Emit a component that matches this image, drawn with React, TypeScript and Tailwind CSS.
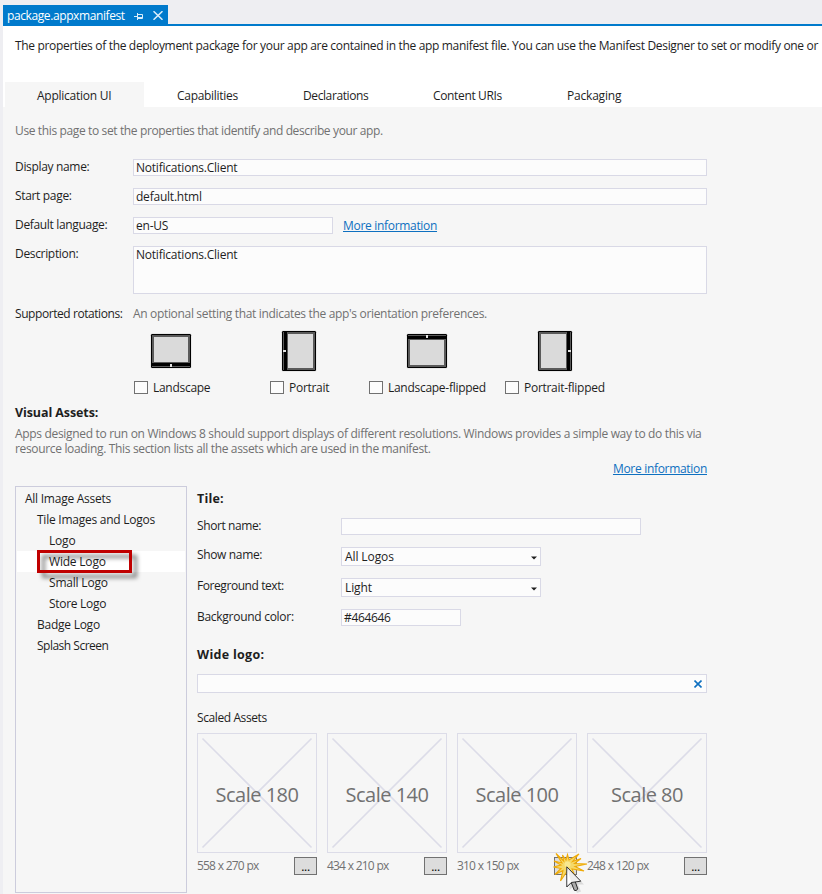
import type { ReactNode } from "react";

const pageTabs = [
  { label: "Application UI", box: "w-[139px] bg-[#f6f6f6] pl-8 tracking-[-0.25px]" },
  { label: "Capabilities", box: "w-[126px] pl-[33px] tracking-[-0.3px]" },
  { label: "Declarations", box: "w-[130px] pl-[33px] tracking-[-0.4px]" },
  { label: "Content URIs", box: "w-[134px] pl-[33px] tracking-[-0.35px]" },
  { label: "Packaging", box: "w-[121px] pl-[33px] tracking-[-0.2px]" },
];

const treeItems = [
  { label: "All Image Assets", indent: "pl-2 tracking-[-0.25px]" },
  { label: "Tile Images and Logos", indent: "pl-5 tracking-[-0.25px]" },
  { label: "Logo", indent: "pl-8 tracking-[-0.2px]" },
  { label: "Wide Logo", indent: "pl-8 tracking-[-0.2px]", selected: true },
  { label: "Small Logo", indent: "pl-8 tracking-[-0.2px]" },
  { label: "Store Logo", indent: "pl-8 tracking-[-0.3px]" },
  { label: "Badge Logo", indent: "pl-5 tracking-[-0.25px]" },
  { label: "Splash Screen", indent: "pl-5 tracking-[-0.5px]" },
];

const assets = [
  { scale: "Scale 180", size: "558 x 270 px" },
  { scale: "Scale 140", size: "434 x 210 px" },
  { scale: "Scale 100", size: "310 x 150 px", clicked: true },
  { scale: "Scale 80", size: "248 x 120 px" },
];

function Field({ className, children }: { className: string; children?: ReactNode }) {
  return (
    <div className={`flex border border-[#d9d9e6] bg-[#fcfcfc] pl-0.5 leading-[16px] tracking-[-0.22px] ${className}`}>
      {children}
    </div>
  );
}

function FormRow({ label, children }: { label: string; children: ReactNode }) {
  return (
    <div className="flex h-[29px]">
      <div className="w-[118px] leading-[16px] tracking-[-0.33px]">{label}</div>
      {children}
    </div>
  );
}

function Select({ value }: { value: string }) {
  return (
    <div className="flex h-[19px] w-[200px] items-center justify-between border border-[#d9d9e6] bg-[#fcfcfc] px-[3px]">
      <span className="leading-[18px] tracking-[-0.1px]">{value}</span>
      <svg width="6" height="4" viewBox="0 0 6 4" className="mt-0.5">
        <path d="M0 0.5h6L3 3.5z" fill="#1e1e1e" />
      </svg>
    </div>
  );
}

function LandscapeDevice({ flipped }: { flipped?: boolean }) {
  return (
    <svg width="42" height="42" viewBox="0 0 42 42">
      <g transform={flipped ? "matrix(1 0 0 -1 0 42)" : undefined}>
        <rect x="0.3" y="3.3" width="41.4" height="35.4" rx="2" fill="#e4e4e4" />
        <rect x="1" y="4" width="40" height="34" rx="1.2" fill="#000" />
        <rect x="2" y="5" width="38" height="32" fill="#5a5a5a" />
        <rect x="4" y="7" width="34" height="25" fill="#dadada" />
        <rect x="2" y="33" width="38" height="3" fill="#000" />
        <rect x="20" y="34" width="2" height="3" fill="#e4e4e4" />
      </g>
    </svg>
  );
}

function PortraitDevice({ flipped }: { flipped?: boolean }) {
  return (
    <svg width="42" height="42" viewBox="0 0 42 42">
      <g transform={flipped ? "matrix(-1 0 0 1 42 0)" : undefined}>
        <rect x="3.3" y="0.3" width="35.4" height="41.4" rx="2" fill="#e4e4e4" />
        <rect x="4" y="1" width="34" height="40" rx="1.2" fill="#000" />
        <rect x="5" y="2" width="32" height="38" fill="#5a5a5a" />
        <rect x="10" y="4" width="25" height="34" fill="#dadada" />
        <rect x="6" y="2" width="3" height="38" fill="#000" />
        <rect x="5" y="20" width="3" height="2" fill="#e4e4e4" />
      </g>
    </svg>
  );
}

const rotations = [
  { label: "Landscape", icon: <LandscapeDevice />, box: "w-[136px]", offset: "pl-[16px]" },
  { label: "Portrait", icon: <PortraitDevice />, box: "w-[99px]", offset: "pl-[8px]" },
  { label: "Landscape-flipped", icon: <LandscapeDevice flipped />, box: "w-[136px]", offset: "pl-[37px]" },
  { label: "Portrait-flipped", icon: <PortraitDevice flipped />, box: "w-[136px]", offset: "pl-[29px]" },
];

function ClickPointer() {
  return (
    <svg className="absolute -top-[6px] -left-[6px]" width="42" height="44" viewBox="0 0 42 44">
      <path
        d="M7 1.5L14.7 9L13.5 3L17 8L18.5 2.5L20 8L30 2L23.5 9.5L32 6.5L25.5 11.5L38 12L26 14.5L35 19L23 17L26 24L19 18L11.5 29L14 18.5L6 22.5L12 16.5L4.5 15L12 13L5 9L13 11Z"
        fill="#f5d968"
        stroke="#efaa08"
        strokeWidth="1.1"
      />
      <circle cx="18.5" cy="12.5" r="3" fill="#f8e88f" />
      <path d="M20.5 17.5V38L25 34L28 41L32 39.5L29 32.5H35Z" fill="#888" opacity=".25" />
      <path d="M22 30L25.3 38.3Q27 39.5 28.8 37L26 29Z" fill="#aaaaaa" stroke="#292929" />
      <path d="M17.8 14.8V35L22.3 30.5L31.8 29.2Z" fill="#eeeeee" stroke="#333333" strokeLinejoin="round" />
      <path d="M18.6 17.5V32.8L22 29.5Z" fill="#ffffff" />
    </svg>
  );
}

export default function App() {
  return (
    <div className="flex h-[894px] w-[822px] flex-col overflow-hidden bg-[#eeeef2] pt-[5px] pl-[3px] font-['Open_Sans','Noto_Sans',sans-serif] text-[12px] tracking-[-0.25px] text-[#1e1e1e]">
      <div className="flex h-[21px] shrink-0 border-b-2 border-[#007acc]">
        <div className="flex h-[19px] w-[165px] items-center bg-[#007acc] pt-0.5 pl-1 text-white">
          <span className="w-[127px] leading-[18px] tracking-[-0.4px]">package.appxmanifest</span>
          <svg width="9" height="7" viewBox="0 0 9 7" fill="none" stroke="#d8ecfa" className="mt-px">
            <path d="M0 3.5h3M3.5 0v7M4 1.5h4.5v4H4M4 4.5h4" />
          </svg>
          <svg width="10" height="9" viewBox="0 0 10 9" fill="none" stroke="#d8ecfa" strokeWidth="1.5" className="ml-[10px]">
            <path d="M0.5 0.2l9 8.6M9.5 0.2l-9 8.6" />
          </svg>
        </div>
      </div>

      <header className="flex h-[81px] shrink-0 flex-col justify-between bg-white pt-3">
        <p className="pl-3 leading-[16px] tracking-[-0.325px] whitespace-nowrap">
          The properties of the deployment package for your app are contained in the app manifest file. You can use the Manifest Designer to set or modify one or
        </p>
        <nav className="flex h-[25px] pl-0.5">
          {pageTabs.map((tab) => (
            <div key={tab.label} className={`leading-[27px] ${tab.box}`}>
              {tab.label}
            </div>
          ))}
        </nav>
      </header>

      <main className="flex min-h-0 flex-1 flex-col bg-[#f6f6f6] pt-4 pl-3">
        <p className="h-9 leading-[16px] tracking-[-0.37px] text-[#717171]">Use this page to set the properties that identify and describe your app.</p>

        <FormRow label="Display name:">
          <Field className="h-[17px] w-[574px]">Notifications.Client</Field>
        </FormRow>
        <FormRow label="Start page:">
          <Field className="h-[17px] w-[574px]">default.html</Field>
        </FormRow>
        <FormRow label="Default language:">
          <Field className="h-[17px] w-[200px]">en-US</Field>
          <a className="ml-[10px] h-[17px] leading-[17px] tracking-[-0.31px] text-[#0e70c0] underline">More information</a>
        </FormRow>
        <FormRow label="Description:">
          <Field className="h-12 w-[574px]">Notifications.Client</Field>
        </FormRow>

        <div className="mt-[31px] flex h-[24px] leading-[16px]">
          <span className="w-[118px] tracking-[-0.43px]">Supported rotations:</span>
          <span className="tracking-[-0.33px] text-[#717171]">An optional setting that indicates the app's orientation preferences.</span>
        </div>
        <div className="flex h-[75px] pl-[119px]">
          {rotations.map((r) => (
            <div key={r.label} className={r.box}>
              <div className={`h-[51px] ${r.offset}`}>{r.icon}</div>
              <div className="flex items-start">
                <span className="h-[13px] w-[14px] shrink-0 border border-[#717171] bg-[#fcfcfc]" />
                <span className="ml-[5px] leading-[13px] tracking-[-0.28px] whitespace-nowrap">{r.label}</span>
              </div>
            </div>
          ))}
        </div>

        <h2 className="h-[21px] text-[12.5px] leading-[16px] font-bold tracking-[-0.1px]">Visual Assets:</h2>
        <div className="h-[35px] leading-[15px] whitespace-nowrap text-[#717171]">
          <p className="tracking-[-0.32px]">
            Apps designed to run on Windows 8 should support displays of different resolutions. Windows provides a simple way to do this via
          </p>
          <p className="tracking-[-0.34px]">resource loading. This section lists all the assets which are used in the manifest.</p>
        </div>
        <div className="flex h-[25px] w-[692px] justify-end">
          <a className="leading-[16px] tracking-[-0.31px] text-[#0e70c0] underline">More information</a>
        </div>

        <div className="flex">
          <div className="h-[407px] w-[172px] shrink-0 border border-[#ccccdc] px-px pt-px">
            {treeItems.map((item) => (
              <div key={item.label} className={`relative h-[21px] leading-[21px] ${item.selected ? "bg-white" : ""}`}>
                <div className={item.indent}>{item.label}</div>
                {item.selected && (
                  <span className="absolute -top-px left-5 h-[23px] w-[95px] border-[3px] border-[#c00000] drop-shadow-[5px_5px_2px_rgba(0,0,0,0.5)]" />
                )}
              </div>
            ))}
          </div>

          <section className="ml-[10px] w-[510px] pt-[5px]">
            <h3 className="h-[27px] text-[12.5px] leading-[16px] font-bold tracking-[0.2px]">Tile:</h3>
            <div className="flex h-[29px]">
              <span className="w-[144px] leading-[16px] tracking-[-0.4px]">Short name:</span>
              <Field className="h-[17px] w-[300px]" />
            </div>
            <div className="flex h-[31px]">
              <span className="w-[144px] leading-[16px] tracking-[-0.35px]">Show name:</span>
              <Select value="All Logos" />
            </div>
            <div className="flex h-[31px]">
              <span className="w-[144px] leading-[16px] tracking-[-0.43px]">Foreground text:</span>
              <Select value="Light" />
            </div>
            <div className="flex h-[38px]">
              <span className="w-[144px] leading-[16px] tracking-[-0.28px]">Background color:</span>
              <Field className="h-[17px] w-[120px]">
                <span className="tracking-[-0.35px]">#464646</span>
              </Field>
            </div>
            <h3 className="h-[27px] text-[12.5px] leading-[16px] font-bold tracking-[0.3px]">Wide logo:</h3>
            <div className="flex h-[19px] items-center justify-end border border-[#d9d9e6] bg-[#fcfcfc] pr-1">
              <svg width="8" height="8" viewBox="0 0 8 8" stroke="#0e70c0" strokeWidth="1.6">
                <path d="M0.5 0.5l7 7M7.5 0.5l-7 7" />
              </svg>
            </div>
            <div className="mt-[17px] h-[23px] leading-[16px] tracking-[-0.4px]">Scaled Assets</div>
            <div className="flex gap-[10px]">
              {assets.map((a) => (
                <div key={a.scale} className="w-[120px]">
                  <div className="relative flex h-[120px] items-center justify-center border border-[#dcdce8]">
                    <svg className="absolute inset-0" width="118" height="118" viewBox="0 0 118 118" stroke="#dcdce8" strokeWidth="1.6">
                      <path d="M4.5 4.5l109 109M113.5 4.5l-109 109" />
                    </svg>
                    <span className="relative pt-1 text-[20px] tracking-[-0.5px] text-[#717171]">{a.scale}</span>
                  </div>
                  <div className="mt-1 flex justify-between">
                    <span className="leading-[17px] tracking-[-0.8px] text-[#717171] [word-spacing:0.2px]">{a.size}</span>
                    <div className="relative h-[18px] w-[23px] border border-[#717171] bg-[#dddddd] text-center leading-[17px] text-black">
                      {a.clicked ? <ClickPointer /> : "..."}
                    </div>
                  </div>
                </div>
              ))}
            </div>
          </section>
        </div>
      </main>
    </div>
  );
}
